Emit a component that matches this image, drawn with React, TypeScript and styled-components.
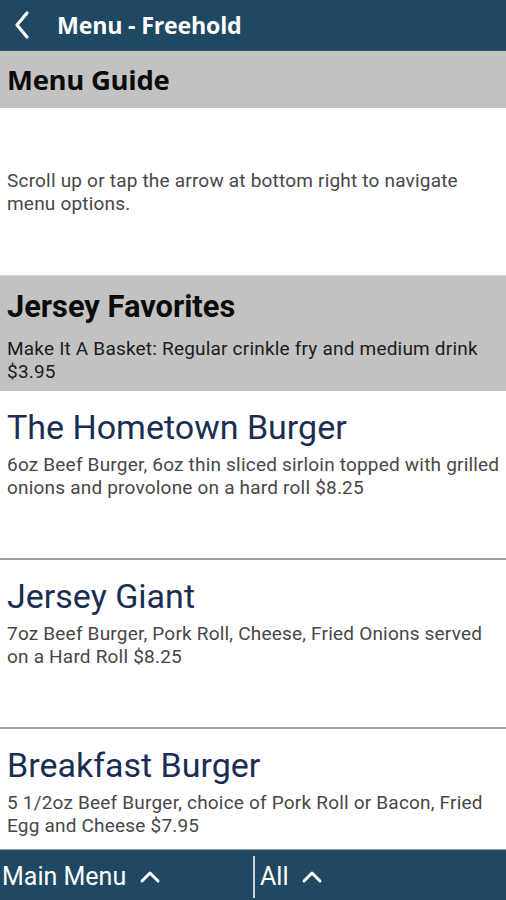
import React from "react";
import styled, { createGlobalStyle } from "styled-components";

const Global = createGlobalStyle`
  html, body { margin: 0; padding: 0; background: #fff; }
  body { width: 506px; height: 900px; overflow: hidden; font-family: Roboto, "Liberation Sans", sans-serif; }
`;

const Screen = styled.div`
  width: 506px;
  height: 900px;
  display: flex;
  flex-direction: column;
  overflow: hidden;
`;

const TopBar = styled.header`
  height: 50px;
  flex: none;
  background: #1f4862;
  display: flex;
  align-items: center;
  border-bottom: 1px solid #2f5670;
`;

const BackButton = styled.button`
  width: 57px;
  height: 50px;
  padding: 0 0 0 12px;
  border: none;
  background: transparent;
  display: flex;
  align-items: center;
  cursor: pointer;
`;

const TopTitle = styled.h1`
  margin: 0;
  color: #fff;
  font-family: "Open Sans", "DejaVu Sans", sans-serif;
  font-weight: 700;
  font-size: 23.2px;
  letter-spacing: -0.2px;
`;

const Scroll = styled.main`
  flex: 1;
  overflow: hidden;
  display: flex;
  flex-direction: column;
`;

const GuideHeader = styled.div`
  height: 57px;
  flex: none;
  background: #c2c2c2;
  display: flex;
  align-items: center;
  padding: 0 7px;
`;

const GuideTitle = styled.h2`
  margin: 0;
  font-family: "Open Sans", "DejaVu Sans", sans-serif;
  font-weight: 700;
  font-size: 27.5px;
  color: #0b0b0b;
  letter-spacing: -0.3px;
`;

const GuideBody = styled.div`
  height: 168px;
  flex: none;
  padding: 61px 2px 0 7px;
  box-sizing: border-box;
  border-bottom: 1px solid #d8d8d8;
`;

const Text = styled.p<{ $dark?: boolean }>`
  margin: 0;
  font-size: 19px;
  letter-spacing: 0.2px;
  line-height: 23px;
  color: ${(p) => (p.$dark ? "#1c1c1c" : "#474747")};
`;

const Category = styled.section`
  flex: none;
  background: #c2c2c2;
  padding: 13px 2px 0 7px;
  height: 115px;
  box-sizing: border-box;
`;

const CategoryTitle = styled.h2`
  margin: 0 0 12px;
  font-family: Roboto, sans-serif;
  font-weight: 700;
  font-size: 30.8px;
  line-height: 36px;
  color: #0b0b0b;
`;

const Item = styled.article`
  flex: none;
  height: 169px;
  box-sizing: border-box;
  padding: 16px 2px 0 7px;
  border-bottom: 2px solid #9e9e9e;
`;

const ItemTitle = styled.h3`
  margin: 0 0 6px;
  font-family: Roboto, sans-serif;
  font-weight: 400;
  font-size: 34px;
  line-height: 40px;
  color: #1b2d52;
`;

const BottomBar = styled.footer`
  height: 50px;
  flex: none;
  background: #1f4862;
  border-top: 1px solid #8fa3b0;
  display: grid;
  grid-template-columns: 253px 2px 1fr;
  align-items: center;
`;

const FooterTab = styled.button<{ $inset: number }>`
  height: 50px;
  display: flex;
  align-items: center;
  gap: 13px;
  padding: 3px 0 0 ${(p) => p.$inset}px;
  border: none;
  background: transparent;
  color: #fff;
  font-family: Roboto, sans-serif;
  font-size: 25px;
  cursor: pointer;
`;

const FooterDivider = styled.div`
  width: 2px;
  height: 42px;
  margin-top: 4px;
  background: #c9d2d8;
`;

const TabLabel = styled.span`
  line-height: 1;
`;

const Chevron = ({ dir }: { dir: "left" | "up" }) =>
  dir === "left" ? (
    <svg width="20" height="30" viewBox="0 0 20 30">
      <path d="M15 3 L5 15 L15 27" fill="none" stroke="#fff" strokeWidth="3.2" strokeLinecap="round" strokeLinejoin="round" />
    </svg>
  ) : (
    <svg width="22" height="14" viewBox="0 0 22 14">
      <path d="M3 11 L11 3 L19 11" fill="none" stroke="#fff" strokeWidth="3" strokeLinecap="round" strokeLinejoin="round" />
    </svg>
  );

const items = [
  {
    name: "The Hometown Burger",
    desc: "6oz Beef Burger, 6oz thin sliced sirloin topped with grilled onions and provolone on a hard roll $8.25",
  },
  {
    name: "Jersey Giant",
    desc: "7oz Beef Burger, Pork Roll, Cheese, Fried Onions served on a Hard Roll $8.25",
  },
  {
    name: "Breakfast Burger",
    desc: "5 1/2oz Beef Burger, choice of Pork Roll or Bacon, Fried Egg and Cheese $7.95",
  },
];

export default function App() {
  return (
    <Screen>
      <Global />
      <TopBar>
        <BackButton aria-label="Back">
          <Chevron dir="left" />
        </BackButton>
        <TopTitle>Menu - Freehold</TopTitle>
      </TopBar>
      <Scroll>
        <GuideHeader>
          <GuideTitle>Menu Guide</GuideTitle>
        </GuideHeader>
        <GuideBody>
          <Text>Scroll up or tap the arrow at bottom right to navigate menu options.</Text>
        </GuideBody>
        <Category>
          <CategoryTitle>Jersey Favorites</CategoryTitle>
          <Text $dark>Make It A Basket: Regular crinkle fry and medium drink $3.95</Text>
        </Category>
        {items.map((it) => (
          <Item key={it.name}>
            <ItemTitle>{it.name}</ItemTitle>
            <Text>{it.desc}</Text>
          </Item>
        ))}
      </Scroll>
      <BottomBar>
        <FooterTab $inset={2}>
          <TabLabel>Main Menu</TabLabel>
          <Chevron dir="up" />
        </FooterTab>
        <FooterDivider />
        <FooterTab $inset={5}>
          <TabLabel>All</TabLabel>
          <Chevron dir="up" />
        </FooterTab>
      </BottomBar>
    </Screen>
  );
}
